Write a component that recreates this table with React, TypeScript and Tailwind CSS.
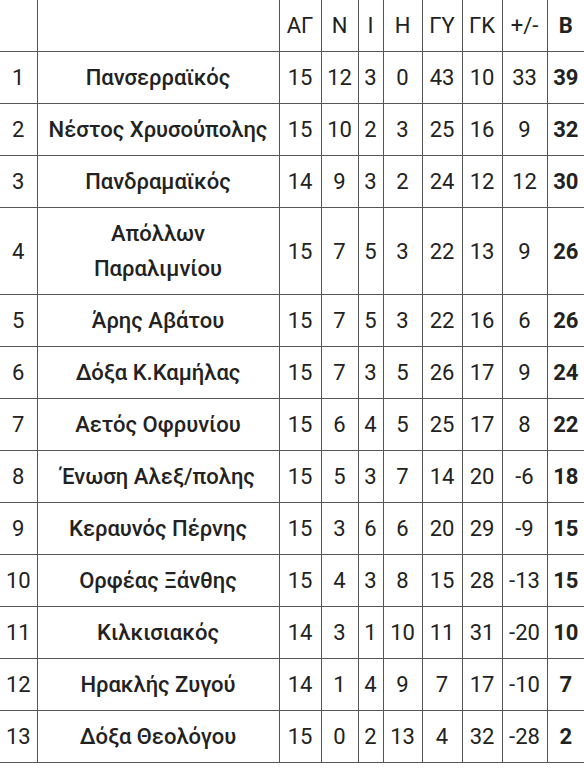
import React from 'react';

// Standings table — Roboto, 52px rows, dark grid lines
type Row = {
  pos: number;
  team: string[];
  stats: (number | string)[];
  pts: number;
};

const ROWS: Row[] = [
  { pos: 1, team: ['Πανσερραϊκός'], stats: [15, 12, 3, 0, 43, 10, 33], pts: 39 },
  { pos: 2, team: ['Νέστος Χρυσούπολης'], stats: [15, 10, 2, 3, 25, 16, 9], pts: 32 },
  { pos: 3, team: ['Πανδραμαϊκός'], stats: [14, 9, 3, 2, 24, 12, 12], pts: 30 },
  { pos: 4, team: ['Απόλλων', 'Παραλιμνίου'], stats: [15, 7, 5, 3, 22, 13, 9], pts: 26 },
  { pos: 5, team: ['Άρης Αβάτου'], stats: [15, 7, 5, 3, 22, 16, 6], pts: 26 },
  { pos: 6, team: ['Δόξα Κ.Καμήλας'], stats: [15, 7, 3, 5, 26, 17, 9], pts: 24 },
  { pos: 7, team: ['Αετός Οφρυνίου'], stats: [15, 6, 4, 5, 25, 17, 8], pts: 22 },
  { pos: 8, team: ['Ένωση Αλεξ/πολης'], stats: [15, 5, 3, 7, 14, 20, -6], pts: 18 },
  { pos: 9, team: ['Κεραυνός Πέρνης'], stats: [15, 3, 6, 6, 20, 29, -9], pts: 15 },
  { pos: 10, team: ['Ορφέας Ξάνθης'], stats: [15, 4, 3, 8, 15, 28, -13], pts: 15 },
  { pos: 11, team: ['Κιλκισιακός'], stats: [14, 3, 1, 10, 11, 31, -20], pts: 10 },
  { pos: 12, team: ['Ηρακλής Ζυγού'], stats: [14, 1, 4, 9, 7, 17, -10], pts: 7 },
  { pos: 13, team: ['Δόξα Θεολόγου'], stats: [15, 0, 2, 13, 4, 32, -28], pts: 2 },
];

const HEADERS = ['ΑΓ', 'Ν', 'Ι', 'Η', 'ΓΥ', 'ΓΚ', '+/-'];

const cell = 'border-r border-b border-[#555] px-0 py-2 text-center align-middle';

export default function App() {
  return (
    <div
      className="w-[584px] h-[768px] overflow-hidden bg-white text-[#222] text-[22px] leading-[35px]"
      style={{ fontFamily: 'Roboto, "Noto Sans", sans-serif' }}
    >
      <table className="table-fixed border-collapse w-[584px]">
        <colgroup>
          <col className="w-[37px]" />
          <col className="w-[242px]" />
          <col className="w-[42px]" />
          <col className="w-[37px]" />
          <col className="w-[25px]" />
          <col className="w-[39px]" />
          <col className="w-[40px]" />
          <col className="w-[40px]" />
          <col className="w-[45px]" />
          <col className="w-[37px]" />
        </colgroup>
        <thead>
          <tr>
            <th className={cell + ' font-normal'}>&nbsp;</th>
            <th className={cell + ' font-normal'}>&nbsp;</th>
            {HEADERS.map((h) => (
              <th key={h} className={cell + ' font-normal'}>
                {h}
              </th>
            ))}
            <th className="border-b border-[#555] px-0 py-2 text-center align-middle font-bold">Β</th>
          </tr>
        </thead>
        <tbody>
          {ROWS.map((r) => (
            <tr key={r.pos}>
              <td className={cell}>{r.pos}</td>
              <td className={cell + ' font-medium'}>
                {r.team.map((t, i) => (
                  <div key={i}>{t}</div>
                ))}
              </td>
              {r.stats.map((s, i) => (
                <td key={i} className={cell}>
                  {s}
                </td>
              ))}
              <td className="border-b border-[#555] px-0 py-2 text-center align-middle font-bold">{r.pts}</td>
            </tr>
          ))}
        </tbody>
      </table>
    </div>
  );
}
